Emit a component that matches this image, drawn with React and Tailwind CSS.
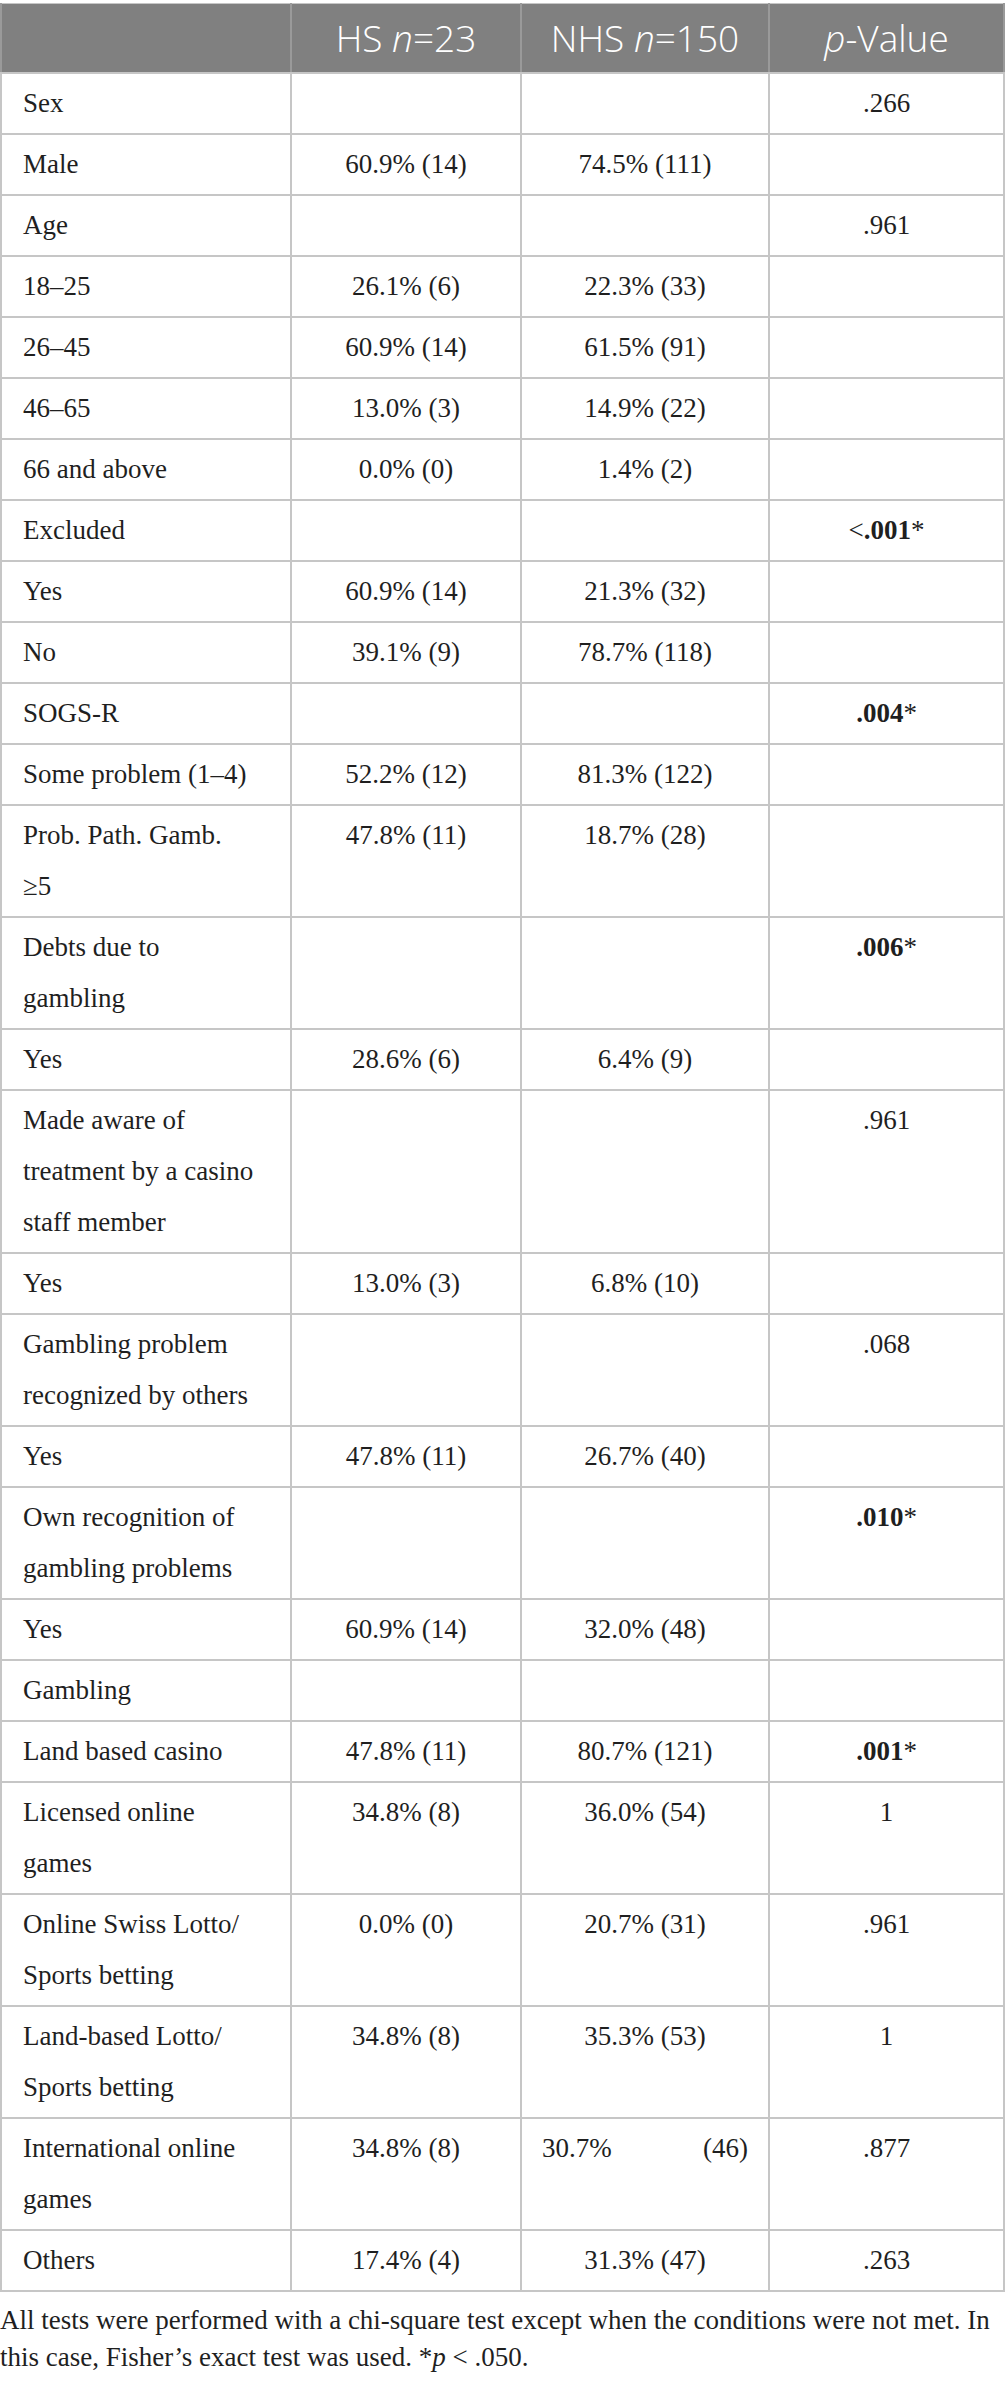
const ROWS = [
  { label: ["Sex"], p: ".266" },
  { label: ["Male"], hs: "60.9% (14)", nhs: "74.5% (111)" },
  { label: ["Age"], p: ".961" },
  { label: ["18–25"], hs: "26.1% (6)", nhs: "22.3% (33)" },
  { label: ["26–45"], hs: "60.9% (14)", nhs: "61.5% (91)" },
  { label: ["46–65"], hs: "13.0% (3)", nhs: "14.9% (22)" },
  { label: ["66 and above"], hs: "0.0% (0)", nhs: "1.4% (2)" },
  { label: ["Excluded"], p: ".001", pre: "<", bold: true },
  { label: ["Yes"], hs: "60.9% (14)", nhs: "21.3% (32)" },
  { label: ["No"], hs: "39.1% (9)", nhs: "78.7% (118)" },
  { label: ["SOGS-R"], p: ".004", bold: true },
  { label: ["Some problem (1–4)"], hs: "52.2% (12)", nhs: "81.3% (122)" },
  { label: ["Prob. Path. Gamb.", "≥5"], hs: "47.8% (11)", nhs: "18.7% (28)" },
  { label: ["Debts due to", "gambling"], p: ".006", bold: true },
  { label: ["Yes"], hs: "28.6% (6)", nhs: "6.4% (9)" },
  { label: ["Made aware of", "treatment by a casino", "staff member"], p: ".961" },
  { label: ["Yes"], hs: "13.0% (3)", nhs: "6.8% (10)" },
  { label: ["Gambling problem", "recognized by others"], p: ".068" },
  { label: ["Yes"], hs: "47.8% (11)", nhs: "26.7% (40)" },
  { label: ["Own recognition of", "gambling problems"], p: ".010", bold: true },
  { label: ["Yes"], hs: "60.9% (14)", nhs: "32.0% (48)" },
  { label: ["Gambling"] },
  { label: ["Land based casino"], hs: "47.8% (11)", nhs: "80.7% (121)", p: ".001", bold: true },
  { label: ["Licensed online", "games"], hs: "34.8% (8)", nhs: "36.0% (54)", p: "1" },
  { label: ["Online Swiss Lotto/", "Sports betting"], hs: "0.0% (0)", nhs: "20.7% (31)", p: ".961" },
  { label: ["Land-based Lotto/", "Sports betting"], hs: "34.8% (8)", nhs: "35.3% (53)", p: "1" },
  { label: ["International online", "games"], hs: "34.8% (8)", nhs: "30.7% (46)", p: ".877", spread: true },
  { label: ["Others"], hs: "17.4% (4)", nhs: "31.3% (47)", p: ".263" },
];

const TD = "border-2 border-[#c6c6c6] py-[4px] align-top leading-[51px]";
const TH = "border-t border-t-[#c6c6c6] border-x-2 border-x-[#9a9a9a] border-b-2 border-b-[#c6c6c6] py-[4px] leading-[60px] font-light";

function PValue({ row }) {
  if (!row.p) return null;
  if (!row.bold) return <span>{row.p}</span>;
  return (
    <span>
      {row.pre}
      <b className="font-bold">{row.p}</b>*
    </span>
  );
}

export default function App() {
  return (
    <div className="w-[1005px] bg-white pt-[3px] font-['Liberation_Serif',serif] text-[#1f1f1f]">
      <table className="w-full table-fixed border-collapse">
        <colgroup>
          <col className="w-[290px]" />
          <col className="w-[230px]" />
          <col className="w-[248px]" />
          <col />
        </colgroup>
        <thead>
          <tr className="bg-[#808080] font-['Open_Sans',sans-serif] text-[37px] font-light text-white">
            <th className={TH}></th>
            <th className={TH}>
              HS <i>n</i>=23
            </th>
            <th className={TH}>
              NHS <i>n</i>=150
            </th>
            <th className={TH}>
              <i>p</i>-Value
            </th>
          </tr>
        </thead>
        <tbody className="text-[27px]">
          {ROWS.map((row, i) => (
            <tr key={i}>
              <td className={`${TD} pl-[21px] pr-[10px] text-left`}>
                {row.label.map((l, j) => (
                  <div key={j}>{l}</div>
                ))}
              </td>
              <td className={`${TD} text-center`}>{row.hs}</td>
              <td className={`${TD} text-center`}>
                {row.spread ? (
                  <div className="flex justify-between px-[20px]">
                    <span>30.7%</span>
                    <span>(46)</span>
                  </div>
                ) : (
                  row.nhs
                )}
              </td>
              <td className={`${TD} text-center`}>
                <PValue row={row} />
              </td>
            </tr>
          ))}
        </tbody>
      </table>
      <p className="mt-[10px] text-[27px] leading-[37px] whitespace-nowrap">
        All tests were performed with a chi-square test except when the conditions were not met. In
        <br />
        this case, Fisher’s exact test was used. *<i>p</i> &lt; .050.
      </p>
    </div>
  );
}
